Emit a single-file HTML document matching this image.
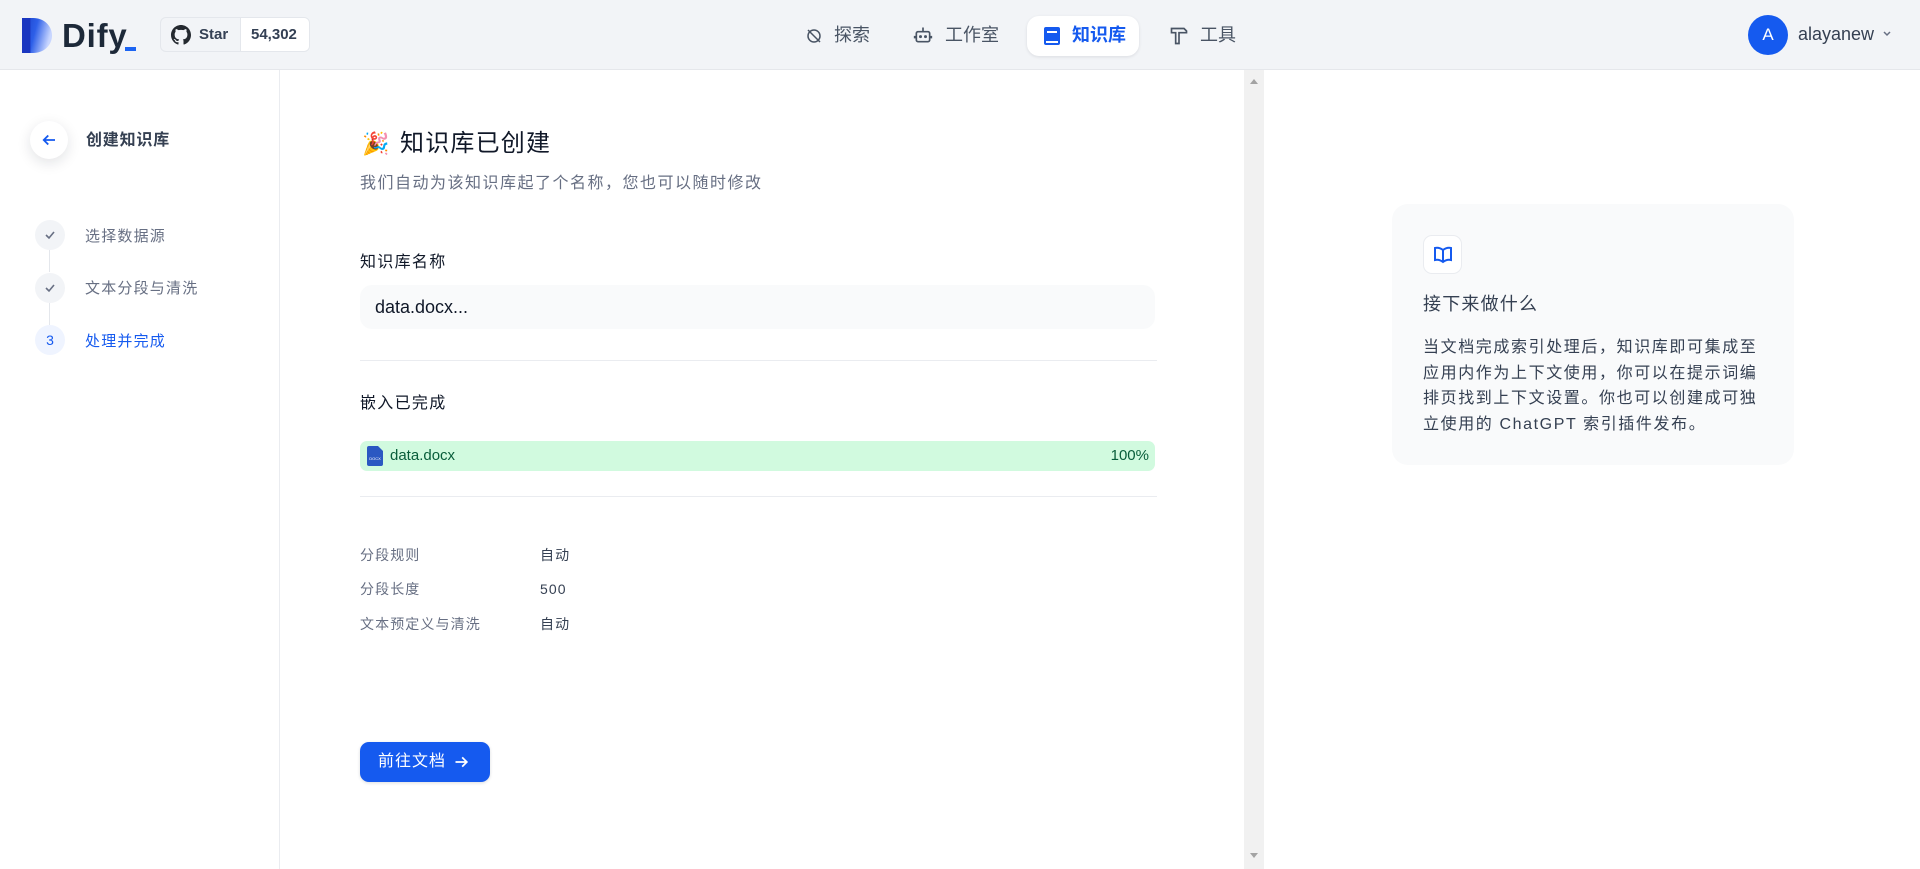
<!DOCTYPE html>
<html><head><meta charset="utf-8"><style>
*{box-sizing:border-box;margin:0;padding:0}
body{width:1920px;height:869px;overflow:hidden;background:#fff;font-family:"Liberation Sans","Noto Sans CJK SC",sans-serif;color:#101828;position:relative}
.a{position:absolute}
.hdr{left:0;top:0;width:1920px;height:70px;background:#f2f4f7;border-bottom:1px solid #e5e7eb}
.navt{font-size:18px;color:#495464;top:24px;line-height:22px}
.side{left:0;top:70px;width:280px;height:799px;border-right:1px solid #eaecf0}
.step{left:35px;width:30px;height:30px;border-radius:50%;background:#f2f4f7;color:#676f83;font-size:14px;display:flex;align-items:center;justify-content:center}
.stt{left:85px;font-size:15px;color:#676f83;line-height:20px;letter-spacing:1.2px}
.lbl{left:360px;font-size:14px;color:#676f83;line-height:20px;letter-spacing:1.1px}
.val{left:540px;font-size:14px;color:#354052;line-height:20px;letter-spacing:1.1px}
</style></head><body>
<div class="a hdr"></div>
<!-- logo -->
<svg class="a" style="left:22px;top:18px" width="30" height="35" viewBox="0 0 32 44" preserveAspectRatio="none"><defs><linearGradient id="g" x1="0" y1="0" x2="1" y2="0.3"><stop offset="0" stop-color="#1a3fc8"/><stop offset="0.5" stop-color="#2d5fe8"/><stop offset="1" stop-color="#c8d6ff"/></linearGradient></defs><path d="M0 0H12C23 0 32 9.5 32 22S23 44 12 44H0Z" fill="url(#g)"/><rect x="0" y="0" width="9" height="44" fill="#1a36c0"/></svg>
<div class="a" style="left:62px;top:17px;font-size:33px;font-weight:bold;color:#1d2939;line-height:38px;letter-spacing:0.8px">Dify</div>
<div class="a" style="left:125px;top:47px;width:11px;height:4px;background:#1c64f2"></div>
<div class="a" style="left:160px;top:17px;width:150px;height:35px;border:1px solid #e4e7ec;border-radius:6px;background:#f2f4f7;overflow:hidden">
<div class="a" style="left:79px;top:0;width:71px;height:35px;background:#fff;border-left:1px solid #e4e7ec"></div>
<svg class="a" style="left:10px;top:7px" width="20" height="20" viewBox="0 0 16 16"><path fill="#24292f" d="M8 0C3.58 0 0 3.58 0 8c0 3.54 2.290 6.53 5.47 7.59.4.07.55-.17.55-.38 0-.19-.01-.82-.01-1.49-2.010.37-2.530-.49-2.690-.94-.09-.23-.48-.94-.82-1.13-.28-.15-.68-.52-.01-.53.63-.01 1.080.58 1.230.82.72 1.210 1.870.87 2.330.66.07-.52.28-.87.51-1.07-1.780-.2-3.640-.89-3.640-3.95 0-.87.31-1.590.82-2.150-.08-.2-.36-1.020.08-2.120 0 0 .67-.21 2.200.82.64-.18 1.320-.27 2-.27.68 0 1.360.09 2 .27 1.530-1.040 2.200-.82 2.200-.82.44 1.100.16 1.920.08 2.120.51.56.82 1.270.82 2.150 0 3.070-1.870 3.750-3.650 3.950.29.25.54.73.54 1.480 0 1.070-.01 1.930-.01 2.200 0 .21.15.46.55.38A8.013 8.013 0 0016 8c0-4.42-3.58-8-8-8z"/></svg>
<div class="a" style="left:38px;top:8px;font-size:15px;font-weight:bold;color:#344054">Star</div>
<div class="a" style="left:90px;top:8px;font-size:15px;font-weight:bold;color:#344054">54,302</div>
</div>
<!-- nav -->
<svg class="a" style="left:805px;top:27px" width="18" height="18" viewBox="0 0 24 24" fill="none" stroke="#495464" stroke-width="2"><circle cx="12" cy="12" r="8"/><path d="M4 4l16 16"/></svg>
<div class="a navt" style="left:834px">探索</div>
<svg class="a" style="left:913px;top:25px" width="20" height="20" viewBox="0 0 24 24" fill="none" stroke="#495464" stroke-width="2"><rect x="4" y="8" width="16" height="12" rx="2"/><path d="M12 3v5M2 13v3M22 13v3"/><circle cx="9" cy="14" r="0.8" fill="#495464"/><circle cx="15" cy="14" r="0.8" fill="#495464"/></svg>
<div class="a navt" style="left:945px">工作室</div>
<div class="a" style="left:1027px;top:16px;width:112px;height:40px;background:#fff;border-radius:12px;box-shadow:0 1px 3px rgba(16,24,40,.1)"></div>
<svg class="a" style="left:1044px;top:27px" width="16" height="18" viewBox="0 0 16 18"><rect x="0" y="0" width="16" height="18" rx="2" fill="#155aef"/><rect x="3" y="4" width="10" height="2" fill="#fff"/><rect x="2" y="14" width="12" height="2" fill="#fff"/></svg>
<div class="a navt" style="left:1072px;color:#155aef;font-weight:bold">知识库</div>
<svg class="a" style="left:1169px;top:26px" width="20" height="20" viewBox="0 0 24 24" fill="none" stroke="#495464" stroke-width="2"><path d="M3 3h15l3 3v2h-9v13h-4V8H3z"/></svg>
<div class="a navt" style="left:1200px">工具</div>
<div class="a" style="left:1748px;top:15px;width:40px;height:40px;border-radius:50%;background:#155aef;color:#fff;font-size:17px;display:flex;align-items:center;justify-content:center">A</div>
<div class="a" style="left:1798px;top:24px;font-size:18px;color:#354052">alayanew</div>
<svg class="a" style="left:1882px;top:30px" width="10" height="8" viewBox="0 0 10 8"><path d="M2 2l3 3 3-3" fill="none" stroke="#676f83" stroke-width="1.5"/></svg>
<!-- sidebar -->
<div class="a side"></div>
<div class="a" style="left:30px;top:121px;width:38px;height:38px;border-radius:50%;background:#fff;box-shadow:0 4px 14px rgba(16,24,40,.12);display:flex;align-items:center;justify-content:center"><svg width="18" height="18" viewBox="0 0 24 24" fill="none" stroke="#155aef" stroke-width="2.4"><path d="M20 12H5M11 6l-6 6 6 6"/></svg></div>
<div class="a" style="left:86px;top:126px;font-size:16px;font-weight:bold;color:#354052;letter-spacing:0.8px">创建知识库</div>
<div class="a" style="left:49px;top:250px;width:1px;height:22px;background:#e4e7ec"></div>
<div class="a" style="left:49px;top:303px;width:1px;height:22px;background:#e4e7ec"></div>
<div class="a step" style="top:220px"><svg width="14" height="14" viewBox="0 0 14 14"><path d="M3 7l3 3 5-6" fill="none" stroke="#676f83" stroke-width="1.6"/></svg></div>
<div class="a stt" style="top:227px">选择数据源</div>
<div class="a step" style="top:273px"><svg width="14" height="14" viewBox="0 0 14 14"><path d="M3 7l3 3 5-6" fill="none" stroke="#676f83" stroke-width="1.6"/></svg></div>
<div class="a stt" style="top:279px">文本分段与清洗</div>
<div class="a step" style="top:325px;background:#eff4ff;color:#155aef">3</div>
<div class="a stt" style="top:332px;color:#155aef">处理并完成</div>
<!-- main -->
<div class="a" style="left:362px;top:131px;font-size:22px;line-height:26px">🎉</div>
<div class="a" style="left:400px;top:129px;font-size:24px;color:#101828;line-height:30px;letter-spacing:1.2px">知识库已创建</div>
<div class="a" style="left:360px;top:173px;font-size:16px;color:#676f83;line-height:22px;letter-spacing:1.5px">我们自动为该知识库起了个名称，您也可以随时修改</div>
<div class="a" style="left:360px;top:252px;font-size:16px;color:#101828;line-height:22px;letter-spacing:1.3px">知识库名称</div>
<div class="a" style="left:360px;top:285px;width:795px;height:44px;background:#f9fafb;border-radius:12px;font-size:18px;color:#101828;line-height:44px;padding-left:15px">data.docx...</div>
<div class="a" style="left:360px;top:360px;width:797px;height:1px;background:#eaecf0"></div>
<div class="a" style="left:360px;top:393px;font-size:16px;color:#101828;line-height:22px;letter-spacing:1.3px">嵌入已完成</div>
<div class="a" style="left:360px;top:441px;width:795px;height:30px;background:#d1fadf;border-radius:7px"></div>
<svg class="a" style="left:367px;top:446px" width="16" height="20" viewBox="0 0 16 20"><path d="M2 0H11L16 5V18Q16 20 14 20H2Q0 20 0 18V2Q0 0 2 0Z" fill="#2b58c2"/><text x="8" y="14" font-size="4" fill="#fff" text-anchor="middle" font-family="Liberation Sans">DOCX</text></svg>
<div class="a" style="left:390px;top:446px;font-size:15px;color:#085d3a;line-height:20px">data.docx</div>
<div class="a" style="left:1098px;top:446px;width:51px;text-align:right;font-size:15px;color:#085d3a;line-height:20px">100%</div>
<div class="a" style="left:360px;top:496px;width:797px;height:1px;background:#eaecf0"></div>
<div class="a lbl" style="top:545px">分段规则</div><div class="a val" style="top:545px">自动</div>
<div class="a lbl" style="top:579px">分段长度</div><div class="a val" style="top:579px">500</div>
<div class="a lbl" style="top:614px">文本预定义与清洗</div><div class="a val" style="top:614px">自动</div>
<div class="a" style="left:360px;top:742px;width:130px;height:40px;background:#155aef;border-radius:9px;box-shadow:0 1px 3px rgba(16,24,40,.15);color:#fff;font-size:16px;line-height:40px;padding-left:18px;letter-spacing:1px">前往文档<svg style="position:absolute;left:93px;top:12px" width="17" height="16" viewBox="0 0 24 24" fill="none" stroke="#fff" stroke-width="2.6"><path d="M3 12h17M13 5l7 7-7 7"/></svg></div>
<!-- scrollbar -->
<div class="a" style="left:1244px;top:70px;width:20px;height:799px;background:#f1f1f1"></div>
<svg class="a" style="left:1249px;top:77px" width="10" height="8"><path d="M1 7L5 2 9 7Z" fill="#a3a3a3"/></svg>
<svg class="a" style="left:1249px;top:852px" width="10" height="8"><path d="M1 1L5 6 9 1Z" fill="#a3a3a3"/></svg>
<!-- right card -->
<div class="a" style="left:1392px;top:204px;width:402px;height:261px;background:#f9fafb;border-radius:16px"></div>
<div class="a" style="left:1423px;top:235px;width:39px;height:39px;background:#fff;border:1px solid #eaecf0;border-radius:9px;display:flex;align-items:center;justify-content:center"><svg width="20" height="18" viewBox="0 0 20 18" fill="none" stroke="#155aef" stroke-width="2"><path d="M10 4Q6 1 2 2V14Q6 13 10 16Q14 13 18 14V2Q14 1 10 4ZM10 4V16"/></svg></div>
<div class="a" style="left:1423px;top:292px;font-size:18px;color:#354052;line-height:24px;letter-spacing:1.2px">接下来做什么</div>
<div class="a" style="left:1423px;top:335px;width:342px;font-size:16px;color:#354052;line-height:25.5px;letter-spacing:1.6px">当文档完成索引处理后，知识库即可集成至应用内作为上下文使用，你可以在提示词编排页找到上下文设置。你也可以创建成可独立使用的 ChatGPT 索引插件发布。</div>
</body></html>
